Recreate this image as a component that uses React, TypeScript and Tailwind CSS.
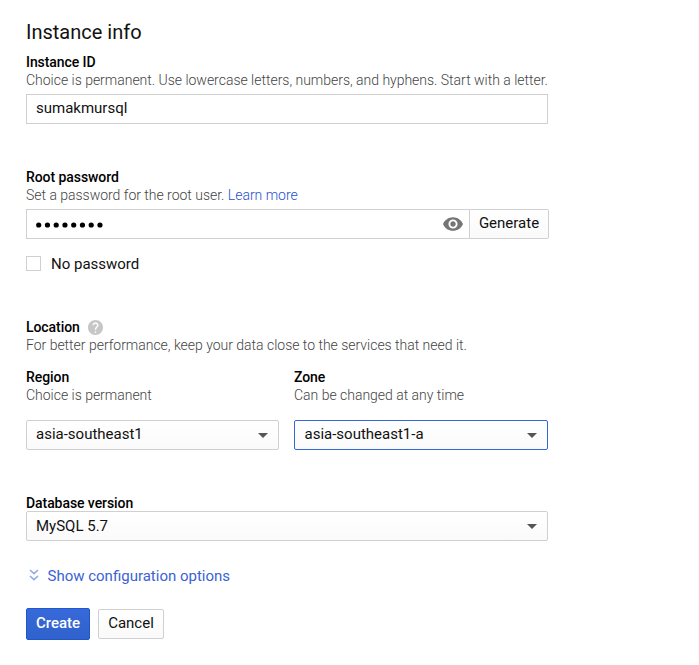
import type { ReactNode } from "react";

function Label({ children }: { children: ReactNode }) {
  return <div className="h-[18px] whitespace-nowrap text-[14px] leading-[18px] font-medium tracking-[-0.07px] text-black">{children}</div>;
}

function Hint({ children }: { children: ReactNode }) {
  return <div className="h-[18px] whitespace-nowrap text-[14px] leading-[18px] font-light tracking-[-0.016px] text-[#444]">{children}</div>;
}

function Select({ value, focused = false, lineClass = "leading-[28px]" }: { value: string; focused?: boolean; lineClass?: string }) {
  return (
    <button
      className={`flex h-[30px] w-full items-start justify-between rounded-[2px] border bg-linear-to-b from-white to-[#fafafa] pr-[10px] text-[15px] text-[#111] ${
        focused ? "border-[#3367d6] pl-[9.5px]" : "border-[#d0d0d0] pl-[9px]"
      }`}
    >
      <span className={lineClass}>{value}</span>
      <svg width="10" height="5" viewBox="0 0 10 5" className="mt-[12px]">
        <path d="M0 0h10L5 5z" fill="#555" />
      </svg>
    </button>
  );
}

export default function App() {
  return (
    <div className="h-[665px] w-[699px] overflow-hidden bg-white pt-[20px] pl-[26px] font-['Roboto',sans-serif] text-[#111]">
      <div className="w-[523px]">
        <h1 className="h-[33px] text-[20px] leading-[24px] font-normal">Instance info</h1>

        <section className="w-[522px]">
          <Label>Instance ID</Label>
          <Hint>Choice is permanent. Use lowercase letters, numbers, and hyphens. Start with a letter.</Hint>
          <div className="mt-[5px] h-[30px] border border-[#d0d0d0] pl-[9px] text-[15px] leading-[26px]">sumakmursql</div>
        </section>

        <section className="mt-[44px]">
          <Label>Root password</Label>
          <Hint>
            Set a password for the root user. <a className="text-[#2450d0]">Learn more</a>
          </Hint>
          <div className="mt-[5px] flex h-[30px]">
            <div className="flex flex-1 items-center justify-between border border-r-0 border-[#d0d0d0] pr-[6px] pl-[9px]">
              <svg width="68" height="6" viewBox="0 0 68 6" className="mt-[1px]" fill="#000">
                {[0, 1, 2, 3, 4, 5, 6, 7].map((i) => (
                  <circle key={i} cx={2.7 + i * 8.75} cy="3" r="2.6" />
                ))}
              </svg>
              <svg width="20" height="14" viewBox="1 4.5 22 15" fill="#757575">
                <path d="M12 4.5C7 4.5 2.73 7.61 1 12c1.73 4.39 6 7.5 11 7.5s9.27-3.11 11-7.5c-1.73-4.39-6-7.5-11-7.5zM12 17c-2.76 0-5-2.24-5-5s2.24-5 5-5 5 2.24 5 5-2.24 5-5 5zm0-8c-1.66 0-3 1.34-3 3s1.34 3 3 3 3-1.34 3-3-1.34-3-3-3z" />
              </svg>
            </div>
            <button className="flex w-[80px] items-start justify-center rounded-r-[2px] border border-[#d0d0d0] bg-linear-to-b from-white to-[#fafafa] text-[15px] leading-[26px]">
              Generate
            </button>
          </div>
          <label className="mt-[15px] flex h-[20px] items-start">
            <span className="mt-[2px] size-[15px] border border-[#d0d0d0]" />
            <span className="ml-[10px] text-[15px] leading-[20px]">No password</span>
          </label>
        </section>

        <section className="mt-[44px] w-[522px]">
          <Label>
            <span className="flex items-center">
              Location
              <svg width="15" height="15" viewBox="2 2 20 20" className="ml-[8px]" fill="#c6c6c6">
                <path d="M12 2C6.48 2 2 6.48 2 12s4.48 10 10 10 10-4.48 10-10S17.52 2 12 2zm1 17h-2v-2h2v2zm2.07-7.75l-.9.92C13.45 12.9 13 13.5 13 15h-2v-.5c0-1.1.45-2.1 1.17-2.83l1.24-1.26c.37-.36.59-.86.59-1.41 0-1.1-.9-2-2-2s-2 .9-2 2H8c0-2.21 1.79-4 4-4s4 1.79 4 4c0 .88-.36 1.68-.93 2.25z" />
              </svg>
            </span>
          </Label>
          <Hint>For better performance, keep your data close to the services that need it.</Hint>
          <div className="mt-[14px] flex gap-[15px]">
            <div className="w-[253px]">
              <Label>Region</Label>
              <Hint>Choice is permanent</Hint>
              <div className="mt-[16px]">
                <Select value="asia-southeast1" lineClass="leading-[26px]" />
              </div>
            </div>
            <div className="w-[254px]">
              <Label>Zone</Label>
              <Hint>Can be changed at any time</Hint>
              <div className="mt-[16px]">
                <Select value="asia-southeast1-a" lineClass="leading-[26px]" focused />
              </div>
            </div>
          </div>
        </section>

        <section className="mt-[44px] w-[522px]">
          <Label>Database version</Label>
          <div className="-mt-px">
            <Select value="MySQL 5.7" />
          </div>
        </section>

        <a className="mt-[25px] flex h-[20px] items-center text-[15px] text-[#3b62d4]">
          <svg width="10" height="12" viewBox="0 0 10 12" className="mr-[8.5px] mb-[2px] ml-[3px]" fill="none" stroke="#8eabea" strokeWidth="1.6">
            <path d="M1 1l4 3.6L9 1M1 7l4 3.6L9 7" />
          </svg>
          Show configuration options
        </a>

        <div className="mt-[22px] flex items-center gap-[8px] text-[15px]">
          <button className="flex h-[32px] w-[64px] items-start justify-center rounded-[2px] border border-[#1f57cc] bg-linear-to-b from-[#3769d9] to-[#2f62cb] leading-[28px] font-medium text-white">
            Create
          </button>
          <button className="flex h-[30px] w-[66px] items-start justify-center rounded-[2px] border border-[#d0d0d0] bg-linear-to-b from-white to-[#fafafa] leading-[26px]">
            Cancel
          </button>
        </div>
      </div>
    </div>
  );
}
